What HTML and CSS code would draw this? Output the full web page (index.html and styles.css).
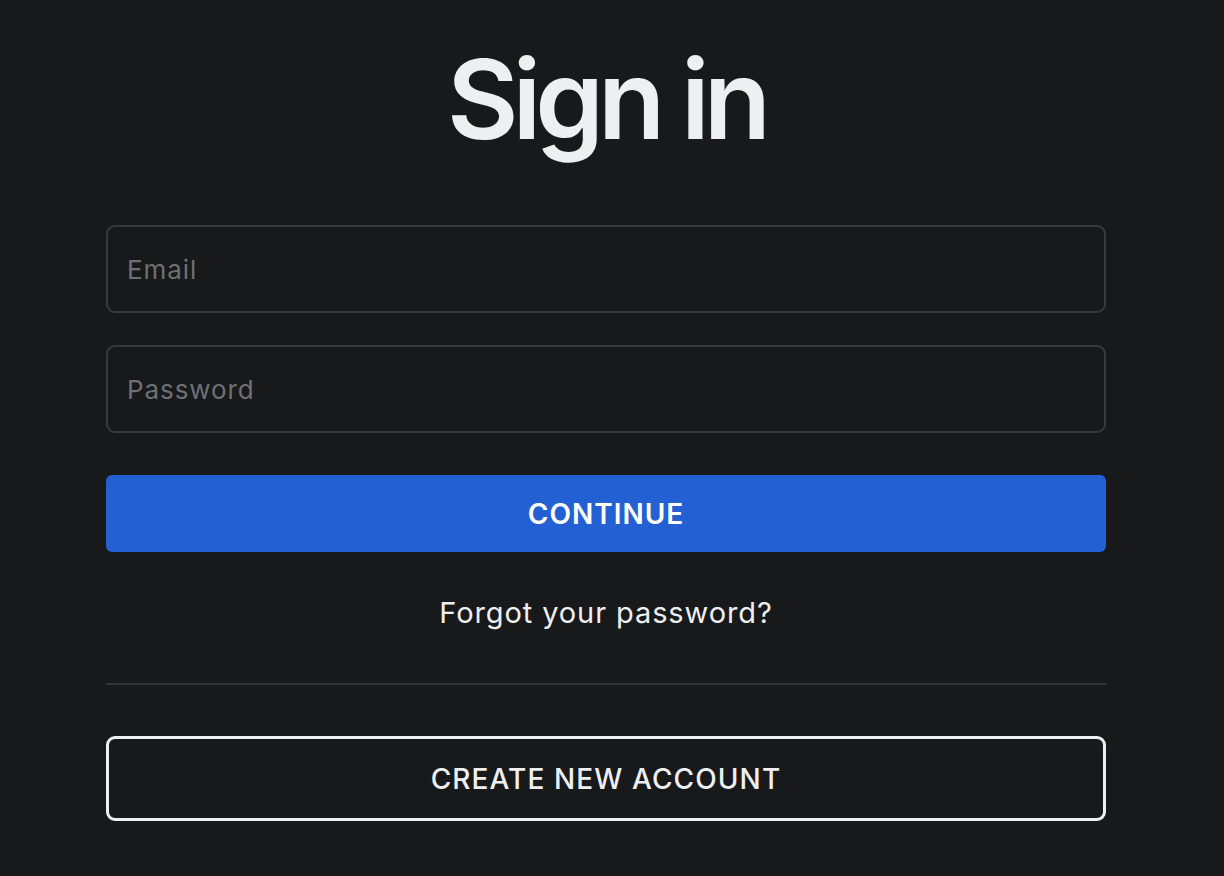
FILE: index.html
```html
<!DOCTYPE html>
<html>
<head>
<meta charset="utf-8">
<link rel="stylesheet" href="styles.css">
</head>
<body>
<main class="signin">
  <h1 class="title">Sign in</h1>
  <form class="form">
    <input class="field" type="email" placeholder="Email">
    <input class="field field-password" type="password" placeholder="Password">
    <button type="button" class="btn-primary">CONTINUE</button>
  </form>
  <a class="forgot" href="#">Forgot your password?</a>
  <hr class="divider">
  <button type="button" class="btn-outline">CREATE NEW ACCOUNT</button>
</main>
</body>
</html>
```
FILE: styles.css
```css
html, body {
  margin: 0;
  padding: 0;
  background: #18191b;
}
body {
  font-family: Inter, "Open Sans", sans-serif;
  color: #eeeff1;
}
.signin {
  width: 1000px;
  margin: 0 0 0 106px;
  display: flex;
  flex-direction: column;
}
.title {
  margin: 38px 0 0;
  height: 187px;
  text-align: center;
  font-size: 110px;
  font-weight: 600;
  letter-spacing: -6px;
  line-height: 122px;
  color: #eeeff1;
}
.form {
  display: flex;
  flex-direction: column;
}
.field {
  box-sizing: border-box;
  height: 88px;
  border: 2px solid #38393c;
  border-radius: 9px;
  background: #18191b;
  padding: 0 19px;
  font-family: inherit;
  font-size: 26px;
  letter-spacing: 0.9px;
  color: #eeeff1;
  outline: none;
}
.field::placeholder {
  color: #6d7175;
}
.field-password {
  margin-top: 32px;
}
.btn-primary {
  margin-top: 42px;
  height: 77px;
  border: none;
  border-radius: 6px;
  background: #2360d3;
  color: #ffffff;
  font-family: inherit;
  font-size: 28px;
  font-weight: 600;
  letter-spacing: 1px;
}
.forgot {
  margin-top: 42px;
  text-align: center;
  color: #eeeff1;
  text-decoration: none;
  font-size: 29px;
  letter-spacing: 0.9px;
  line-height: 38px;
}
.divider {
  margin: 51px 0 0;
  border: none;
  height: 2px;
  background: #333437;
}
.btn-outline {
  margin-top: 51px;
  height: 85px;
  box-sizing: border-box;
  border: 3px solid #eeeff1;
  border-radius: 9px;
  background: transparent;
  color: #eeeff1;
  font-family: inherit;
  font-size: 28px;
  font-weight: 500;
  letter-spacing: 1.1px;
}
```
